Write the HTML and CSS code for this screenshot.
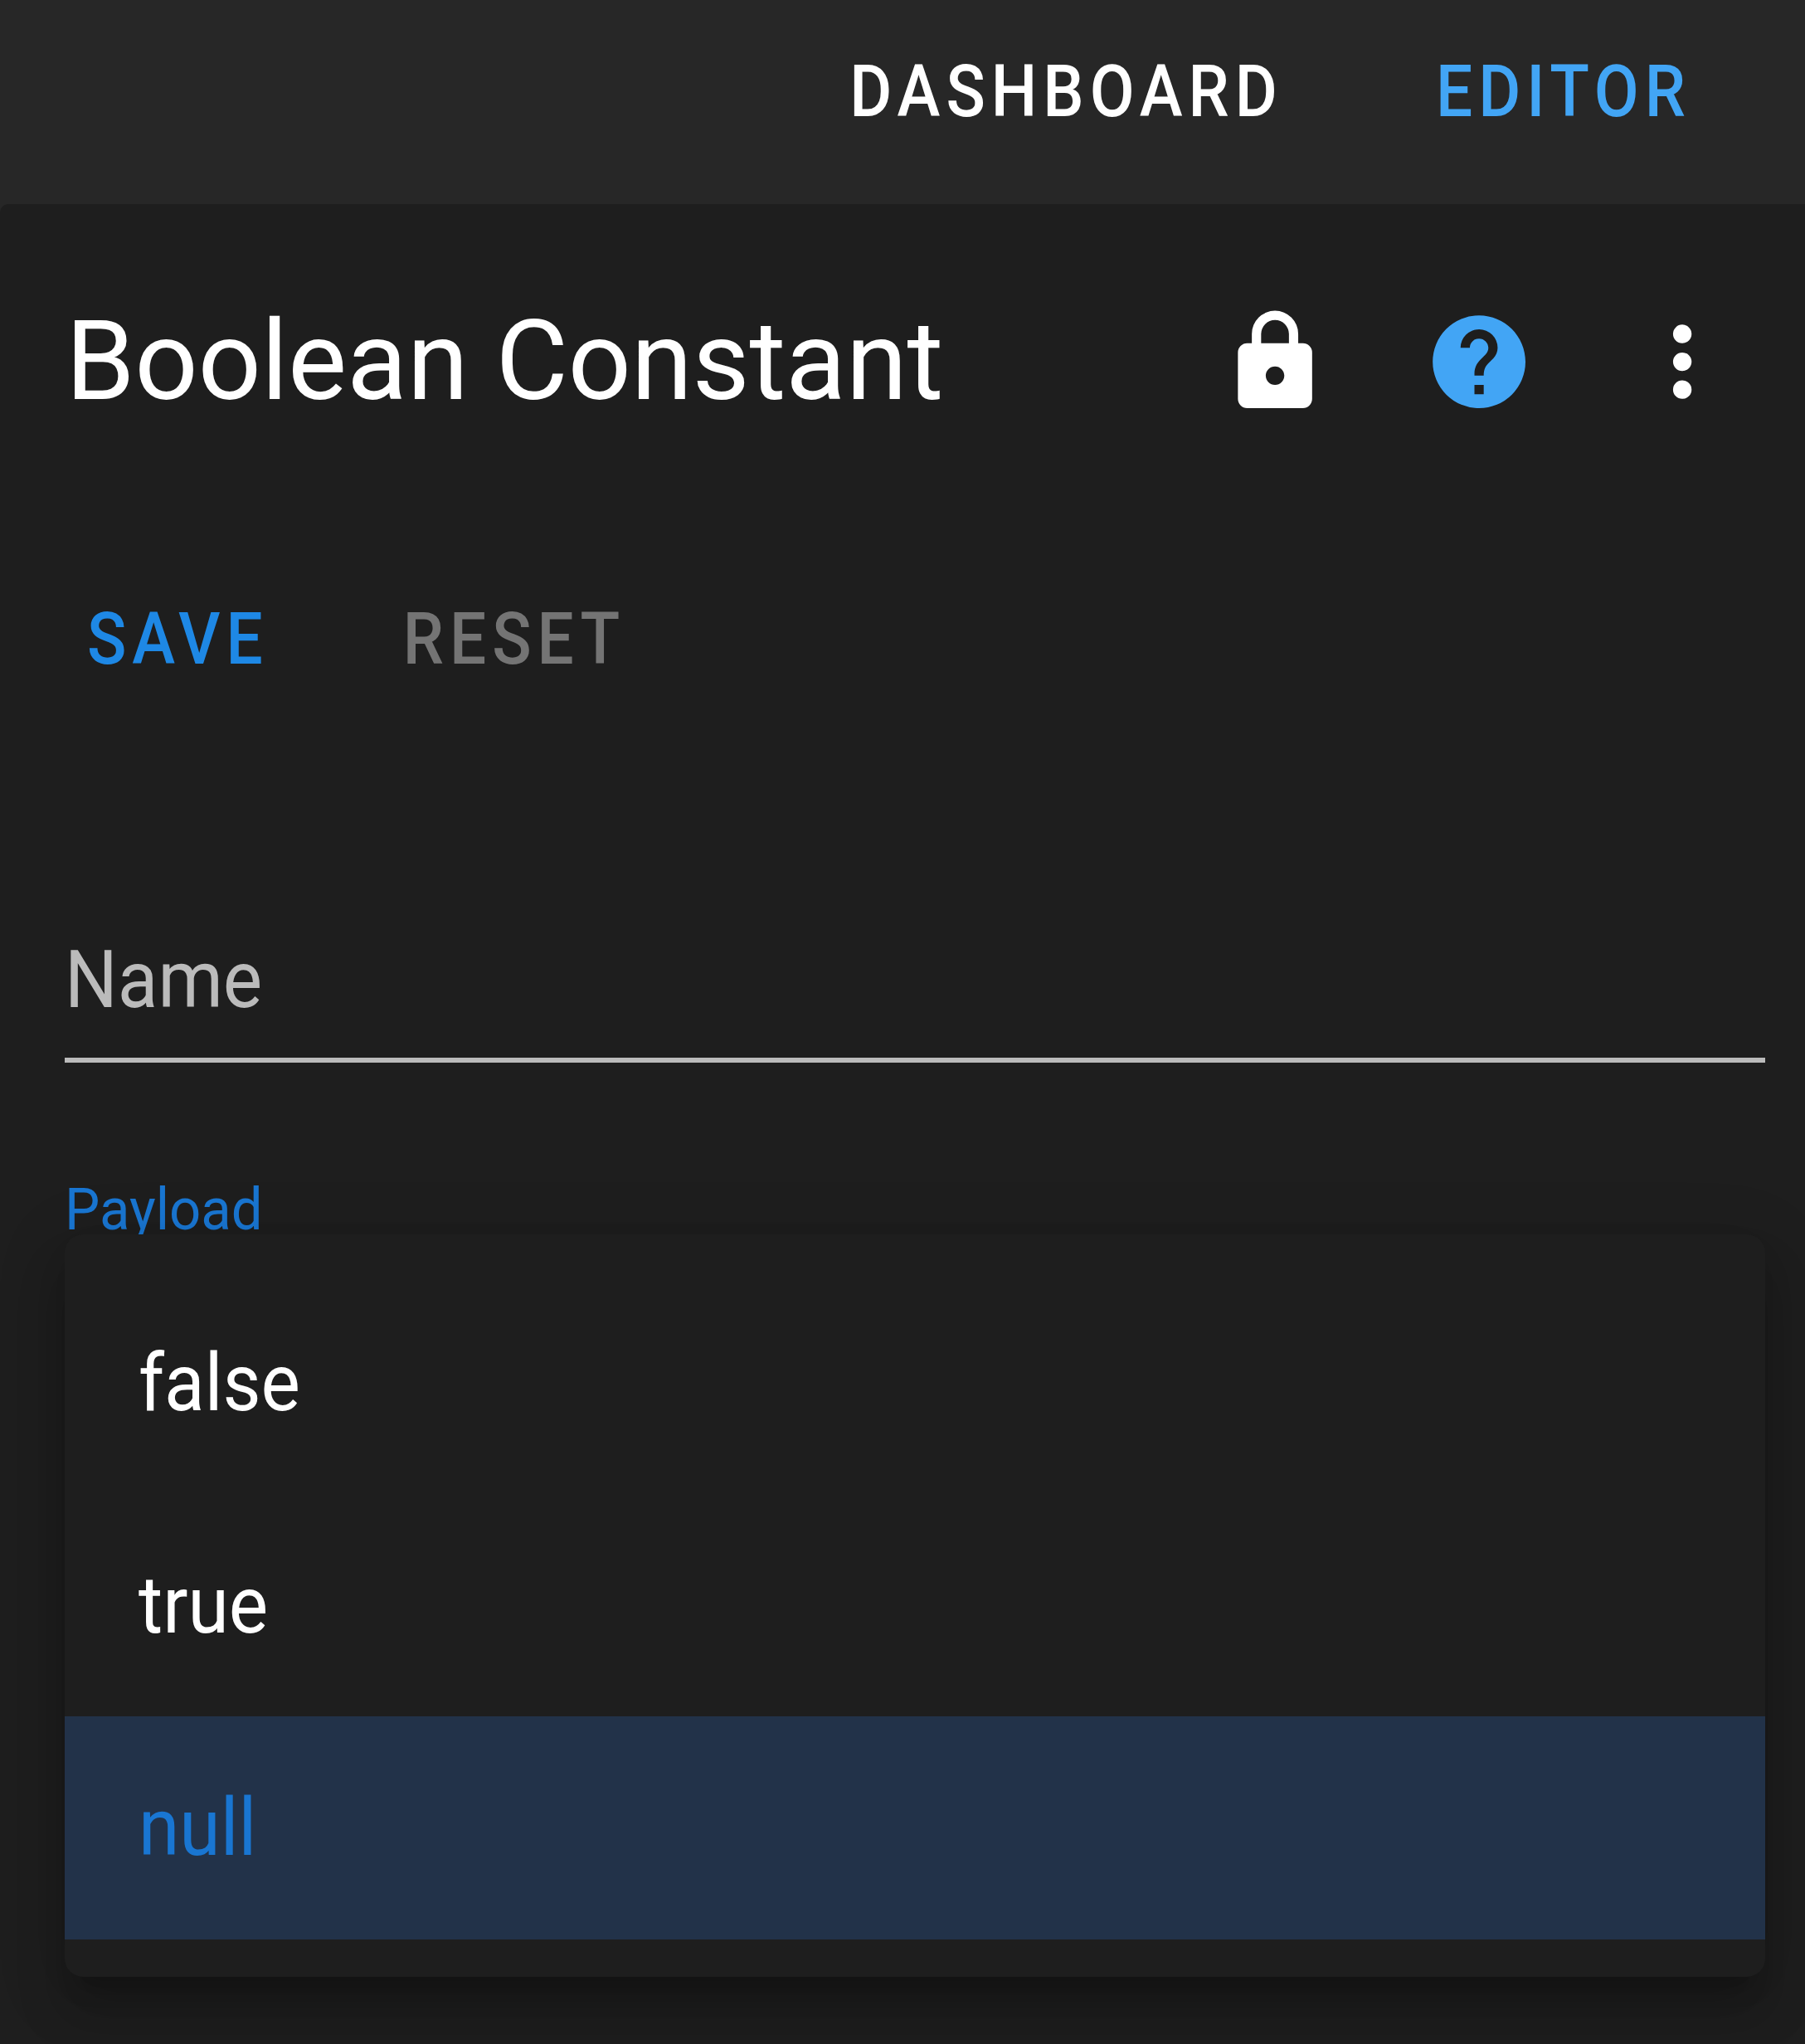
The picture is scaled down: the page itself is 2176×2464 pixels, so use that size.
FILE: index.html
```html
<!DOCTYPE html>
<html lang="en">
<head>
  <meta charset="UTF-8">
  <title>Boolean Constant</title>
  <meta name="viewport" content="width=device-width, initial-scale=1.0">
  <link rel="stylesheet" href="styles.css">
</head>
<body>
  <header>
    <nav>
      <a href="#" class="btn dashboard">DASHBOARD</a>
      <a href="#" class="btn editor">EDITOR</a>
    </nav>
  </header>

  <main>
    <div class="toolbar">
      <h1>Boolean Constant</h1>
      <div class="icons">
        <svg class="icon" viewBox="0 0 24 24"><path d="M12,17A2,2 0 0,0 14,15C14,13.89 13.1,13 12,13A2,2 0 0,0 10,15A2,2 0 0,0 12,17M18,8A2,2 0 0,1 20,10V20A2,2 0 0,1 18,22H6A2,2 0 0,1 4,20V10C4,8.89 4.9,8 6,8H7V6A5,5 0 0,1 12,1A5,5 0 0,1 17,6V8H18M12,3A3,3 0 0,0 9,6V8H15V6A3,3 0 0,0 12,3Z"/></svg>
        <svg class="icon help" viewBox="0 0 24 24"><path d="M15.07,11.25L14.17,12.17C13.45,12.89 13,13.5 13,15H11V14.5C11,13.39 11.45,12.39 12.17,11.67L13.41,10.41C13.78,10.05 14,9.55 14,9C14,7.89 13.1,7 12,7A2,2 0 0,0 10,9H8A4,4 0 0,1 12,5A4,4 0 0,1 16,9C16,9.88 15.64,10.67 15.07,11.25M13,19H11V17H13M12,2A10,10 0 0,0 2,12A10,10 0 0,0 12,22A10,10 0 0,0 22,12C22,6.47 17.5,2 12,2Z"/></svg>
        <svg class="icon" viewBox="0 0 24 24"><path d="M12,16A2,2 0 0,1 14,18A2,2 0 0,1 12,20A2,2 0 0,1 10,18A2,2 0 0,1 12,16M12,10A2,2 0 0,1 14,12A2,2 0 0,1 12,14A2,2 0 0,1 10,12A2,2 0 0,1 12,10M12,4A2,2 0 0,1 14,6A2,2 0 0,1 12,8A2,2 0 0,1 10,6A2,2 0 0,1 12,4Z"/></svg>
      </div>
    </div>

    <div class="actions">
      <a href="#" class="btn save">SAVE</a>
      <a href="#" class="btn reset">RESET</a>
    </div>

    <div class="field">
      <label class="name">Name</label>
    </div>

    <div class="select">
      <label class="payload">Payload</label>
      <ul class="menu">
        <li><span>false</span></li>
        <li><span>true</span></li>
        <li class="active"><span>null</span></li>
      </ul>
    </div>
  </main>
</body>
</html>
```
FILE: styles.css
```css
* {
  box-sizing: border-box;
}
body {
  margin: 0;
  height: 2464px;
  overflow: hidden;
  background: #272727;
  color: #fff;
  font-family: Roboto, sans-serif;
}
header {
  height: 246px;
  padding: 74px 137px 0 0;
}
nav {
  display: flex;
  justify-content: flex-end;
  gap: 184px;
}
.btn {
  display: block;
  font-size: 78.26px;
  line-height: 1;
  font-weight: 500;
  letter-spacing: 0.0893em;
  color: #fff;
  text-decoration: none;
  transform: scaleY(1.106);
  transform-origin: 0 84%;
}
.btn.editor {
  color: #42a5f5;
}
main {
  height: 2218px;
  padding: 122px 48px 0 78px;
  background: #1e1e1e;
  border-top-left-radius: 10px;
}
.toolbar {
  display: flex;
  justify-content: space-between;
  height: 135px;
}
h1 {
  margin: 0 0 0 1px;
  font-size: 134.2px;
  line-height: 1;
  font-weight: 400;
  letter-spacing: -0.3px;
}
.icons {
  display: flex;
  gap: 111px;
  margin-top: 1px;
  margin-right: 33px;
}
.icon {
  width: 134.2px;
  height: 134.2px;
  fill: #fff;
}
.icon.help {
  fill: #42a5f5;
}
.actions {
  display: flex;
  gap: 162px;
  margin-top: 231px;
  padding-left: 27px;
  height: 79px;
}
.btn.save {
  color: #1e88e5;
}
.btn.reset {
  color: #747474;
}
.field {
  height: 142px;
  margin-top: 326px;
  border-bottom: 6px solid #bbb;
}
label {
  display: block;
  line-height: 1;
  transform-origin: 0 84%;
}
.name {
  font-size: 89.4px;
  color: #bbb;
  transform: scaleY(1.07);
}
.select {
  margin-top: 145px;
}
.payload {
  height: 62px;
  font-size: 67.1px;
  color: #1976d2;
  transform: scaleY(1.06);
}
.menu {
  position: relative;
  list-style: none;
  margin: 0;
  padding: 45px 0;
  background: #1e1e1e;
  border-radius: 22px;
  box-shadow: 0 28px 28px -17px rgba(0,0,0,0.2), 0 45px 56px 6px rgba(0,0,0,0.14), 0 17px 78px 11px rgba(0,0,0,0.12);
}
.menu li {
  height: 268.2px;
  padding: 92px 0 0 89px;
  font-size: 89.4px;
  line-height: 1;
}
.menu span {
  display: inline-block;
  transform: scaleY(1.07);
  transform-origin: 0 84%;
}
.menu .active {
  background: #223249;
  color: #1976d2;
}
```
